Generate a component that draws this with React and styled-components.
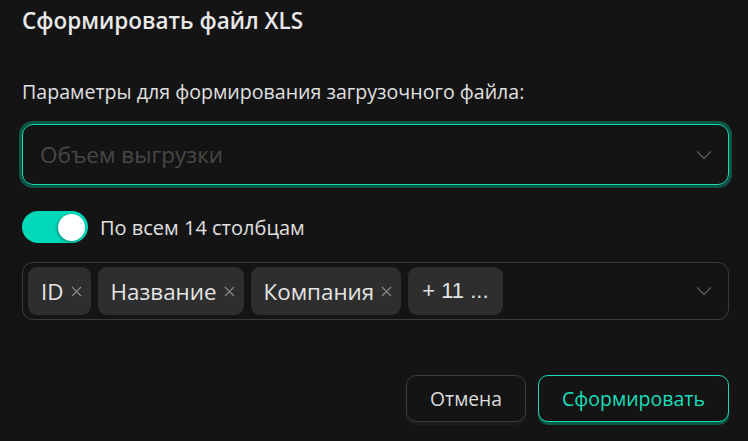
import React from 'react'
import styled, { createGlobalStyle } from 'styled-components'

const Global = createGlobalStyle`
  html, body {
    margin: 0;
    background: #141414;
  }
  body {
    font-family: "Open Sans", "Noto Sans", sans-serif;
    color: #e6e6e6;
  }
`

const Dialog = styled.div`
  width: 748px;
  height: 441px;
  box-sizing: border-box;
  padding: 7px 19px 0 22px;
  display: flex;
  flex-direction: column;
`

const Title = styled.h1`
  margin: 0;
  font-size: 22.5px;
  font-weight: 600;
  line-height: 28px;
  color: #e8e8e8;
`

const Label = styled.div`
  margin-top: 44px;
  font-size: 19.6px;
  line-height: 26px;
  color: #e0e0e0;
`

const Select = styled.div`
  margin-top: ${p => p.$gap}px;
  height: ${p => (p.$tags ? 58 : 61)}px;
  box-sizing: border-box;
  border: 1px solid ${p => (p.$focused ? '#19d8b6' : '#3b3b3b')};
  box-shadow: ${p => (p.$focused ? '0 0 0 3px #0b5546' : 'none')};
  border-radius: 11px;
  display: flex;
  align-items: center;
  padding: 0 16px 0 ${p => (p.$tags ? '5px' : '17px')};
`

const Placeholder = styled.span`
  flex: 1;
  font-size: 22.5px;
  color: #474747;
`

const Tags = styled.div`
  flex: 1;
  display: flex;
  gap: 7px;
  align-items: center;
`

const Tag = styled.span`
  height: 48px;
  box-sizing: border-box;
  padding: 0 ${p => (p.$more ? '14px' : '9px')} 0 ${p => (p.$more ? '14px' : '13px')};
  background: #2e2e2e;
  border-radius: 9px;
  display: flex;
  align-items: center;
  gap: 7px;
  font-size: ${p => (p.$more ? '22px' : '22.4px')};
  color: #e4e4e4;
  font-family: ${p => (p.$more ? '"Liberation Sans", Arial, sans-serif' : 'inherit')};
`

const Remove = styled.span`
  display: flex;
`

const Chevron = () => (
  <svg width="16" height="10" viewBox="0 0 16 10" fill="none">
    <path d="M1 1.5l7 7 7-7" stroke="#5a5a5a" strokeWidth="1.4" />
  </svg>
)

const Cross = () => (
  <svg width="11" height="11" viewBox="0 0 11 11" fill="none">
    <path d="M1 1l9 9M10 1L1 10" stroke="#8a8a8a" strokeWidth="1.2" />
  </svg>
)

const SwitchRow = styled.label`
  margin-top: 26px;
  height: 32px;
  display: flex;
  align-items: center;
  gap: 12px;
  font-size: 20px;
  color: #e0e0e0;
`

const Track = styled.span`
  width: 66px;
  height: 32px;
  border-radius: 16px;
  background: #03d8b8;
  display: flex;
  align-items: center;
  justify-content: ${p => (p.$on ? 'flex-end' : 'flex-start')};
  padding: 0 3px;
  box-sizing: border-box;
`

const Knob = styled.span`
  width: 27px;
  height: 27px;
  border-radius: 50%;
  background: #ffffff;
  box-shadow: -1px 1px 3px rgba(0, 0, 0, 0.35);
`

const Footer = styled.div`
  margin-top: 55px;
  display: flex;
  justify-content: flex-end;
  gap: 12px;
`

const Button = styled.button`
  height: 47px;
  padding: 0 23px;
  border-radius: 10px;
  background: #141414;
  font-family: inherit;
  font-size: ${p => (p.$primary ? '19.5px' : '19.3px')};
  cursor: pointer;
  border: 1px solid ${p => (p.$primary ? '#19dbb8' : '#3c3c3c')};
  color: ${p => (p.$primary ? '#19dfbb' : '#dcdcdc')};
  box-shadow: 0 3px 0 ${p => (p.$primary ? '#0b5a4a' : '#1c1c1c')};
`

export default function App() {
  const tags = ['ID', 'Название', 'Компания']
  return (
    <>
      <Global />
      <Dialog>
        <Title>Сформировать файл XLS</Title>
        <Label>Параметры для формирования загрузочного файла:</Label>
        <Select $focused $gap={19}>
          <Placeholder>Объем выгрузки</Placeholder>
          <Chevron />
        </Select>
        <SwitchRow>
          <Track $on>
            <Knob />
          </Track>
          По всем 14 столбцам
        </SwitchRow>
        <Select $tags $gap={19}>
          <Tags>
            {tags.map(t => (
              <Tag key={t}>
                {t}
                <Remove><Cross /></Remove>
              </Tag>
            ))}
            <Tag $more>+ 11 ...</Tag>
          </Tags>
          <Chevron />
        </Select>
        <Footer>
          <Button>Отмена</Button>
          <Button $primary>Сформировать</Button>
        </Footer>
      </Dialog>
    </>
  )
}
